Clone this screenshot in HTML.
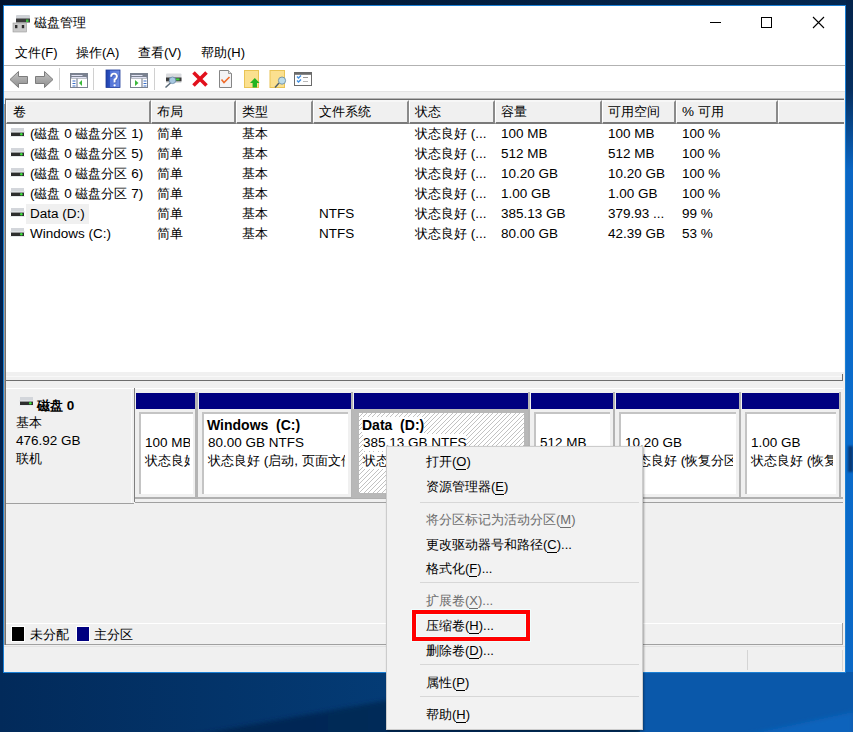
<!DOCTYPE html><html><head><meta charset="utf-8"><style>
*{margin:0;padding:0;box-sizing:border-box}
html,body{width:853px;height:732px;overflow:hidden}
body{position:relative;font-family:"Liberation Sans",sans-serif;font-size:13.49px;color:#000;
background:linear-gradient(180deg,rgba(1,14,34,0.72) 0%,rgba(1,14,34,0.5) 15%,rgba(1,14,34,0) 26%),linear-gradient(90deg,#01204c 0%,#022c5c 28%,#043f7a 45%,#0a58a8 75%,#0a66c4 100%)}
.a{position:absolute}
.t{position:absolute;white-space:pre;line-height:15px}
.hl{position:absolute;height:1px}
.vl{position:absolute;width:1px}
.hc{position:absolute;top:100px;height:24px;background:#f0f0f0;border-left:1px solid #fff;border-top:2px solid #f7f7f7;border-right:2px solid #8a8a8a;border-bottom:2px solid #7a7a7a}
.nav{position:absolute;top:393px;height:16px;background:#000080}
.pb{position:absolute;top:412px;height:82px;background:#fff;border-top:2px solid #c4c4c4;border-left:2px solid #c4c4c4;overflow:hidden}
.pt{position:absolute;white-space:pre;line-height:17px;left:4px;background:#fff}
.mi{position:absolute;white-space:pre;line-height:15px;font-size:13px}
.dis{color:#6d6d6d}
.ms{position:absolute;height:1px;background:#d7d7d7}
u{text-decoration:none;border-bottom:1px solid currentColor}
</style></head><body>
<svg class="a" style="left:0;top:640px" width="853" height="92" viewBox="0 640 853 92">
<defs><linearGradient id="bm" x1="0" y1="0" x2="1" y2="0"><stop offset="0" stop-color="#022a5a"/><stop offset="0.5" stop-color="#043d78"/><stop offset="1" stop-color="#0a5cb0"/></linearGradient>
<linearGradient id="dk" x1="0" y1="0" x2="1" y2="0"><stop offset="0" stop-color="#01204a"/><stop offset="0.6" stop-color="#022a58"/><stop offset="1" stop-color="#03305f"/></linearGradient>
<filter id="bl"><feGaussianBlur stdDeviation="2"/></filter></defs>
<rect x="0" y="640" width="853" height="92" fill="url(#bm)"/>
<path d="M-10,745 L200,734 L400,698 L640,655 L640,745 Z" fill="url(#dk)" filter="url(#bl)"/>
<rect x="640" y="640" width="213" height="92" fill="#0a58aa"/>
<path d="M700,745 L853,712 L853,745 Z" fill="#0a64bc" filter="url(#bl)"/>
</svg>
<div class="a" style="left:846px;top:0;width:7px;height:672px;background:linear-gradient(180deg,#04244c 0px,#062f60 90px,#0a66c4 170px,#0a6ccc 400px,#0a68c6 672px)"></div>
<div class="a" style="left:848px;top:446px;width:5px;height:26px;background:#093a78;filter:blur(1px)"></div>
<div class="a" style="left:3px;top:5px;width:843px;height:668px;border:1px solid #1a7fd4;background:#f0f0f0"></div>
<div class="a" style="left:4px;top:6px;width:841px;height:85px;background:#fff"></div>
<svg class="a" style="left:12px;top:14px" width="20" height="20" viewBox="0 0 20 20">
 <rect x="4" y="1" width="14" height="4" rx="1" fill="#cfd2d6"/>
 <rect x="4" y="4.5" width="14" height="4" fill="#3b3b3b"/>
 <rect x="14" y="5.5" width="2.5" height="2.5" fill="#3fbf3f"/>
 <rect x="1" y="9" width="13.5" height="9" fill="#c9c9c9" stroke="#9a9a9a" stroke-width="0.6"/>
 <rect x="3" y="11" width="2.4" height="3.2" fill="#2e2e2e"/>
 <rect x="9.8" y="11" width="2.4" height="3.2" fill="#2e2e2e"/>
</svg>
<div class="t" style="left:34px;top:15px;font-size:13px">磁盘管理</div>
<div class="a" style="left:710px;top:22px;width:11px;height:1px;background:#000"></div>
<div class="a" style="left:761px;top:17px;width:11px;height:11px;border:1px solid #000"></div>
<svg class="a" style="left:812px;top:16px" width="13" height="13" viewBox="0 0 13 13"><path d="M1 1L12 12M12 1L1 12" stroke="#000" stroke-width="1.1"/></svg>
<div class="t" style="left:15px;top:45px;font-size:13px">文件(F)</div>
<div class="t" style="left:76px;top:45px;font-size:13px">操作(A)</div>
<div class="t" style="left:138px;top:45px;font-size:13px">查看(V)</div>
<div class="t" style="left:201px;top:45px;font-size:13px">帮助(H)</div>
<div class="hl" style="left:4px;top:65px;width:841px;background:#b2b2b2"></div>
<div class="vl" style="left:59px;top:68px;height:22px;background:#d0d0d0"></div>
<div class="vl" style="left:93px;top:68px;height:22px;background:#d0d0d0"></div>
<div class="vl" style="left:154px;top:68px;height:22px;background:#d0d0d0"></div>
<svg class="a" style="left:0;top:66px" width="330" height="25" viewBox="0 66 330 25">
<defs>
<linearGradient id="ga" x1="0" y1="0" x2="0" y2="1"><stop offset="0" stop-color="#c4c4c4"/><stop offset="1" stop-color="#8e8e8e"/></linearGradient>
<linearGradient id="gb" x1="0" y1="0" x2="1" y2="0"><stop offset="0" stop-color="#1f3fa8"/><stop offset="0.25" stop-color="#2a50c0"/><stop offset="0.3" stop-color="#5274d8"/><stop offset="1" stop-color="#6b8ae2"/></linearGradient>
</defs>
<path d="M10,79.5 L18.5,71.5 L18.5,76.5 L27.5,76.5 L27.5,83.5 L18.5,83.5 L18.5,87.5 Z" fill="url(#ga)" stroke="#7c7c7c" stroke-width="1"/>
<path d="M53,79.5 L44.5,71.5 L44.5,76.5 L35.5,76.5 L35.5,83.5 L44.5,83.5 L44.5,87.5 Z" fill="url(#ga)" stroke="#7c7c7c" stroke-width="1"/>
<rect x="70.5" y="73.5" width="17" height="14" fill="#fff" stroke="#7b8290" stroke-width="1"/>
<rect x="70.5" y="73.5" width="17" height="5" fill="#7b8290"/>
<rect x="71.5" y="75" width="11" height="0.9" fill="#eef"/><rect x="71.5" y="77" width="15" height="0.9" fill="#eef"/>
<rect x="76.5" y="78.5" width="1" height="9" fill="#6a7385"/>
<rect x="72.5" y="80.5" width="3" height="1" fill="#3a6fc8"/><rect x="72.5" y="83" width="3" height="1" fill="#3a6fc8"/><rect x="72.5" y="85.5" width="3" height="1" fill="#3a6fc8"/>
<path d="M79,83 L82,80 L82,86 Z" fill="#3cb83c"/>
<rect x="106" y="70" width="14" height="17.5" fill="url(#gb)"/>
<rect x="106" y="70" width="14" height="17.5" fill="none" stroke="#1c3a9a" stroke-width="0.8"/>
<path d="M111.2,76.8 Q111.2,73.6 114,73.6 Q116.9,73.6 116.9,76.4 Q116.9,78.4 114.6,79.6 L114.6,82.6" fill="none" stroke="#1a2f80" stroke-width="2.2" opacity="0.5" transform="translate(0.6,0.6)"/><path d="M111.2,76.8 Q111.2,73.6 114,73.6 Q116.9,73.6 116.9,76.4 Q116.9,78.4 114.6,79.6 L114.6,82.6" fill="none" stroke="#fff" stroke-width="1.9"/><circle cx="114.6" cy="85.3" r="1.15" fill="#fff"/>
<rect x="130.5" y="73.5" width="17" height="14" fill="#fff" stroke="#7b8290" stroke-width="1"/>
<rect x="130.5" y="73.5" width="17" height="5" fill="#7b8290"/>
<rect x="131.5" y="75" width="11" height="0.9" fill="#eef"/><rect x="131.5" y="77" width="15" height="0.9" fill="#eef"/>
<rect x="141.5" y="78.5" width="1" height="9" fill="#6a7385"/>
<rect x="143.5" y="80.5" width="3" height="1" fill="#3a6fc8"/><rect x="143.5" y="83" width="3" height="1" fill="#3a6fc8"/><rect x="143.5" y="85.5" width="3" height="1" fill="#3a6fc8"/>
<path d="M135,80 L138.5,83 L135,86 Z" fill="#3cb83c"/>
<rect x="166" y="73.5" width="15.5" height="9.5" rx="1" fill="#d8dadd"/>
<rect x="166" y="77.5" width="15.5" height="3.8" fill="#3a3a3a"/>
<rect x="176" y="78.4" width="3.5" height="2" fill="#3fd23f"/>
<line x1="171" y1="82.5" x2="165.5" y2="87.5" stroke="#5a6a78" stroke-width="1.5"/>
<circle cx="172.5" cy="80.3" r="3.3" fill="#a8c8e0" stroke="#6a8aa8" stroke-width="0.8"/>
<path d="M193.5,72.5 L206.5,85.5 M206.5,72.5 L193.5,85.5" stroke="#e2101c" stroke-width="3.6"/>
<path d="M219.5,70.5 L228.5,70.5 L231.5,73.5 L231.5,87.5 L219.5,87.5 Z" fill="#f3f3f5" stroke="#858585" stroke-width="1"/>
<path d="M228.5,70.5 L228.5,73.5 L231.5,73.5" fill="#e0e0e0" stroke="#858585" stroke-width="0.8"/>
<path d="M221.5,79.5 L224,82.5 L229.5,77" fill="none" stroke="#ee6a2a" stroke-width="1.6"/>
<rect x="244.5" y="70.5" width="14" height="17" fill="#fbe08f" stroke="#e9c455" stroke-width="1"/>
<path d="M250,83 L254.8,78 L259.6,83 L257,83 L257,87.5 L252.6,87.5 L252.6,83 Z" fill="#22b422"/>
<rect x="270" y="70.5" width="14.5" height="17" fill="#fbe08f" stroke="#e9c455" stroke-width="1"/>
<line x1="279" y1="83" x2="275" y2="87.5" stroke="#4f5f6a" stroke-width="1.4"/>
<circle cx="282" cy="80.6" r="3.6" fill="#bcdcea" stroke="#6f8fa0" stroke-width="0.9"/>
<rect x="294.5" y="72.5" width="17" height="13" fill="#fff" stroke="#6b6b6b" stroke-width="1"/>
<rect x="294.5" y="72.5" width="17" height="2.3" fill="#6b6b6b"/>
<path d="M297,76.5 L298.5,78 L301,75.5 M297,80.5 L298.5,82 L301,79.5" fill="none" stroke="#3f8ee0" stroke-width="1.4"/>
<rect x="303" y="77" width="5" height="1" fill="#9a9a9a"/><rect x="303" y="81" width="5" height="1" fill="#b8b8b8"/>
</svg>
<div class="hl" style="left:4px;top:91px;width:841px;background:#e4e4e4"></div>
<div class="a" style="left:5px;top:98px;width:839px;height:274px;background:#fff;border-top:1px solid #b4b4b4;border-left:1px solid #8a8a8a"></div>
<div class="hl" style="left:5px;top:99px;width:839px;background:#6a6a6a"></div>
<div class="hc" style="left:6px;width:145px"></div>
<div class="t" style="left:13px;top:104px">卷</div>
<div class="hc" style="left:151px;width:85px"></div>
<div class="t" style="left:157px;top:104px">布局</div>
<div class="hc" style="left:236px;width:77px"></div>
<div class="t" style="left:242px;top:104px">类型</div>
<div class="hc" style="left:313px;width:96px"></div>
<div class="t" style="left:319px;top:104px">文件系统</div>
<div class="hc" style="left:409px;width:86px"></div>
<div class="t" style="left:415px;top:104px">状态</div>
<div class="hc" style="left:495px;width:107px"></div>
<div class="t" style="left:501px;top:104px">容量</div>
<div class="hc" style="left:602px;width:74px"></div>
<div class="t" style="left:608px;top:104px">可用空间</div>
<div class="hc" style="left:676px;width:102px"></div>
<div class="t" style="left:682px;top:104px">% 可用</div>
<div class="hc" style="left:778px;width:66px;border-right:none"></div>
<svg class="a" style="left:10px;top:128px" width="15" height="10" viewBox="0 0 15 10">
<rect x="1" y="0" width="13" height="4.6" fill="#d3d6db"/><rect x="0.3" y="3.2" width="14.4" height="1.4" fill="#e2e4e8"/>
<rect x="1" y="4.6" width="13" height="3.4" fill="#2e2e2e"/><rect x="0.3" y="8" width="14.4" height="1" fill="#e6e8ec"/>
<circle cx="11.3" cy="6.3" r="1.25" fill="#3ae43a"/></svg>
<div class="t" style="left:30px;top:126px">(磁盘 0 磁盘分区 1)</div>
<div class="t" style="left:157px;top:126px">简单</div>
<div class="t" style="left:242px;top:126px">基本</div>
<div class="t" style="left:415px;top:126px">状态良好 (...</div>
<div class="t" style="left:501px;top:126px">100 MB</div>
<div class="t" style="left:608px;top:126px">100 MB</div>
<div class="t" style="left:682px;top:126px">100 %</div>
<svg class="a" style="left:10px;top:148px" width="15" height="10" viewBox="0 0 15 10">
<rect x="1" y="0" width="13" height="4.6" fill="#d3d6db"/><rect x="0.3" y="3.2" width="14.4" height="1.4" fill="#e2e4e8"/>
<rect x="1" y="4.6" width="13" height="3.4" fill="#2e2e2e"/><rect x="0.3" y="8" width="14.4" height="1" fill="#e6e8ec"/>
<circle cx="11.3" cy="6.3" r="1.25" fill="#3ae43a"/></svg>
<div class="t" style="left:30px;top:146px">(磁盘 0 磁盘分区 5)</div>
<div class="t" style="left:157px;top:146px">简单</div>
<div class="t" style="left:242px;top:146px">基本</div>
<div class="t" style="left:415px;top:146px">状态良好 (...</div>
<div class="t" style="left:501px;top:146px">512 MB</div>
<div class="t" style="left:608px;top:146px">512 MB</div>
<div class="t" style="left:682px;top:146px">100 %</div>
<svg class="a" style="left:10px;top:168px" width="15" height="10" viewBox="0 0 15 10">
<rect x="1" y="0" width="13" height="4.6" fill="#d3d6db"/><rect x="0.3" y="3.2" width="14.4" height="1.4" fill="#e2e4e8"/>
<rect x="1" y="4.6" width="13" height="3.4" fill="#2e2e2e"/><rect x="0.3" y="8" width="14.4" height="1" fill="#e6e8ec"/>
<circle cx="11.3" cy="6.3" r="1.25" fill="#3ae43a"/></svg>
<div class="t" style="left:30px;top:166px">(磁盘 0 磁盘分区 6)</div>
<div class="t" style="left:157px;top:166px">简单</div>
<div class="t" style="left:242px;top:166px">基本</div>
<div class="t" style="left:415px;top:166px">状态良好 (...</div>
<div class="t" style="left:501px;top:166px">10.20 GB</div>
<div class="t" style="left:608px;top:166px">10.20 GB</div>
<div class="t" style="left:682px;top:166px">100 %</div>
<svg class="a" style="left:10px;top:188px" width="15" height="10" viewBox="0 0 15 10">
<rect x="1" y="0" width="13" height="4.6" fill="#d3d6db"/><rect x="0.3" y="3.2" width="14.4" height="1.4" fill="#e2e4e8"/>
<rect x="1" y="4.6" width="13" height="3.4" fill="#2e2e2e"/><rect x="0.3" y="8" width="14.4" height="1" fill="#e6e8ec"/>
<circle cx="11.3" cy="6.3" r="1.25" fill="#3ae43a"/></svg>
<div class="t" style="left:30px;top:186px">(磁盘 0 磁盘分区 7)</div>
<div class="t" style="left:157px;top:186px">简单</div>
<div class="t" style="left:242px;top:186px">基本</div>
<div class="t" style="left:415px;top:186px">状态良好 (...</div>
<div class="t" style="left:501px;top:186px">1.00 GB</div>
<div class="t" style="left:608px;top:186px">1.00 GB</div>
<div class="t" style="left:682px;top:186px">100 %</div>
<div class="a" style="left:26px;top:204px;width:63px;height:20px;background:#f0f0f0"></div>
<svg class="a" style="left:10px;top:208px" width="15" height="10" viewBox="0 0 15 10">
<rect x="1" y="0" width="13" height="4.6" fill="#d3d6db"/><rect x="0.3" y="3.2" width="14.4" height="1.4" fill="#e2e4e8"/>
<rect x="1" y="4.6" width="13" height="3.4" fill="#2e2e2e"/><rect x="0.3" y="8" width="14.4" height="1" fill="#e6e8ec"/>
<circle cx="11.3" cy="6.3" r="1.25" fill="#3ae43a"/></svg>
<div class="t" style="left:30px;top:206px">Data (D:)</div>
<div class="t" style="left:157px;top:206px">简单</div>
<div class="t" style="left:242px;top:206px">基本</div>
<div class="t" style="left:319px;top:206px">NTFS</div>
<div class="t" style="left:415px;top:206px">状态良好 (...</div>
<div class="t" style="left:501px;top:206px">385.13 GB</div>
<div class="t" style="left:608px;top:206px">379.93 ...</div>
<div class="t" style="left:682px;top:206px">99 %</div>
<svg class="a" style="left:10px;top:228px" width="15" height="10" viewBox="0 0 15 10">
<rect x="1" y="0" width="13" height="4.6" fill="#d3d6db"/><rect x="0.3" y="3.2" width="14.4" height="1.4" fill="#e2e4e8"/>
<rect x="1" y="4.6" width="13" height="3.4" fill="#2e2e2e"/><rect x="0.3" y="8" width="14.4" height="1" fill="#e6e8ec"/>
<circle cx="11.3" cy="6.3" r="1.25" fill="#3ae43a"/></svg>
<div class="t" style="left:30px;top:226px">Windows (C:)</div>
<div class="t" style="left:157px;top:226px">简单</div>
<div class="t" style="left:242px;top:226px">基本</div>
<div class="t" style="left:319px;top:226px">NTFS</div>
<div class="t" style="left:415px;top:226px">状态良好 (...</div>
<div class="t" style="left:501px;top:226px">80.00 GB</div>
<div class="t" style="left:608px;top:226px">42.39 GB</div>
<div class="t" style="left:682px;top:226px">53 %</div>
<div class="a" style="left:5px;top:372px;width:839px;height:8px;background:#f0f0f0"></div>
<div class="hl" style="left:6px;top:376px;width:836px;background:#f8f8f8"></div>
<div class="hl" style="left:5px;top:380px;width:838px;background:#6d6d6d"></div>
<div class="vl" style="left:842px;top:374px;height:6px;background:#6d6d6d"></div>
<div class="hl" style="left:5px;top:388px;width:838px;background:#fff"></div>
<div class="a" style="left:5px;top:99px;width:1px;height:546px;background:#707070"></div>
<div class="a" style="left:4px;top:104px;width:1px;height:541px;background:#a39d97"></div>
<div class="vl" style="left:131px;top:388px;height:115px;background:#fafafa"></div>
<div class="vl" style="left:134px;top:388px;height:114px;background:#808080"></div>
<div class="hl" style="left:6px;top:503px;width:128px;background:#a0a0a0"></div>
<svg class="a" style="left:19px;top:397px" width="15" height="10" viewBox="0 0 15 10">
<rect x="1" y="0" width="13" height="4.6" fill="#d3d6db"/><rect x="0.3" y="3.2" width="14.4" height="1.4" fill="#e2e4e8"/>
<rect x="1" y="4.6" width="13" height="3.4" fill="#2e2e2e"/><rect x="0.3" y="8" width="14.4" height="1" fill="#e6e8ec"/>
<circle cx="11.3" cy="6.3" r="1.25" fill="#3ae43a"/></svg>
<div class="t" style="left:37px;top:398px;font-weight:bold">磁盘 0</div>
<div class="t" style="left:16px;top:415px">基本</div>
<div class="t" style="left:16px;top:433px">476.92 GB</div>
<div class="t" style="left:16px;top:451px">联机</div>
<div class="a" style="left:135px;top:497px;width:708px;height:2px;background:#b0b0b0"></div>
<div class="a" style="left:135px;top:502px;width:708px;height:1px;background:#a0a0a0"></div>
<div class="nav" style="left:136px;width:59px"></div>
<div class="a" style="left:195px;top:392px;width:3px;height:106px;background:#b4b4b4"></div>
<div class="pb" style="left:139px;width:54px">
<div class="a" style="left:0;top:0;width:49px;height:80px;overflow:hidden">
<div class="pt" style="left:4px;top:20px">100 MB</div>
<div class="pt" style="left:4px;top:38px">状态良好</div>
</div></div>
<div class="nav" style="left:199px;width:152px"></div>
<div class="a" style="left:351px;top:392px;width:2px;height:106px;background:#b4b4b4"></div>
<div class="pb" style="left:202px;width:146px">
<div class="a" style="left:0;top:0;width:141px;height:80px;overflow:hidden">
<div class="pt" style="left:3px;top:3px;font-weight:bold;font-size:14px">Windows  (C:)</div>
<div class="pt" style="left:4px;top:20px">80.00 GB NTFS</div>
<div class="pt" style="left:4px;top:38px">状态良好 (启动, 页面文件, 故障转储, 主分区)</div>
</div></div>
<div class="nav" style="left:354px;width:174px"></div>
<div class="a" style="left:528px;top:392px;width:2px;height:106px;background:#b4b4b4"></div>
<div class="a" style="left:352px;top:409px;width:176px;height:89px;background:#b8b8b8"></div>
<div class="a" style="left:359px;top:413px;width:165px;height:80px;background:repeating-linear-gradient(135deg,#fff 0px,#fff 2.4px,#c2c2c2 2.4px,#c2c2c2 3.18px);overflow:hidden"></div>
<div class="a" style="left:359px;top:413px;width:165px;height:80px;overflow:hidden">
<div class="a" style="left:0;top:0;width:162px;height:80px;overflow:hidden">
<div class="pt" style="left:3px;top:4px;font-weight:bold;font-size:14px">Data  (D:)</div>
<div class="pt" style="left:4px;top:21px">385.13 GB NTFS</div>
<div class="pt" style="left:4px;top:39px">状态良好 (主分区)</div>
</div></div>
<div class="nav" style="left:531px;width:82px"></div>
<div class="a" style="left:613px;top:392px;width:2px;height:106px;background:#b4b4b4"></div>
<div class="pb" style="left:534px;width:76px">
<div class="a" style="left:0;top:0;width:71px;height:80px;overflow:hidden">
<div class="pt" style="left:4px;top:20px">512 MB</div>
<div class="pt" style="left:4px;top:38px">状态良好 (恢复分区)</div>
</div></div>
<div class="nav" style="left:616px;width:123px"></div>
<div class="a" style="left:739px;top:392px;width:2px;height:106px;background:#b4b4b4"></div>
<div class="pb" style="left:619px;width:117px">
<div class="a" style="left:0;top:0;width:112px;height:80px;overflow:hidden">
<div class="pt" style="left:4px;top:20px">10.20 GB</div>
<div class="pt" style="left:4px;top:38px">状态良好 (恢复分区)</div>
</div></div>
<div class="nav" style="left:742px;width:97px"></div>
<div class="a" style="left:839px;top:392px;width:2px;height:106px;background:#b4b4b4"></div>
<div class="pb" style="left:745px;width:91px">
<div class="a" style="left:0;top:0;width:86px;height:80px;overflow:hidden">
<div class="pt" style="left:4px;top:20px">1.00 GB</div>
<div class="pt" style="left:4px;top:38px">状态良好 (恢复分区)</div>
</div></div>
<div class="hl" style="left:6px;top:623px;width:837px;background:#fff"></div>
<div class="hl" style="left:6px;top:644px;width:837px;background:#a0a0a0"></div>
<div class="vl" style="left:842px;top:623px;height:22px;background:#a0a0a0"></div>
<div class="a" style="left:12px;top:627px;width:12px;height:14px;background:#000;outline:1px solid #fff"></div>
<div class="t" style="left:30px;top:627px">未分配</div>
<div class="a" style="left:77px;top:627px;width:12px;height:14px;background:#000080;outline:1px solid #fff"></div>
<div class="t" style="left:94px;top:627px">主分区</div>
<div class="hl" style="left:4px;top:646px;width:841px;background:#e2e2e2"></div>
<div class="vl" style="left:747px;top:650px;height:20px;background:#d4d4d4"></div>
<div class="vl" style="left:842px;top:650px;height:21px;background:#d4d4d4"></div>
<div class="a" style="left:386px;top:446px;width:257px;height:284px;background:#f2f2f2;border:1px solid #cccccc;box-shadow:1px 1px 2px rgba(0,0,0,0.35)"></div>
<div class="mi" style="left:426px;top:454px">打开(<u>O</u>)</div>
<div class="mi" style="left:426px;top:479px">资源管理器(<u>E</u>)</div>
<div class="ms" style="left:420px;top:502px;width:219px"></div>
<div class="mi dis" style="left:426px;top:512px">将分区标记为活动分区(<u>M</u>)</div>
<div class="mi" style="left:426px;top:537px">更改驱动器号和路径(<u>C</u>)...</div>
<div class="mi" style="left:426px;top:561px">格式化(<u>F</u>)...</div>
<div class="ms" style="left:420px;top:582px;width:219px"></div>
<div class="mi dis" style="left:426px;top:593px">扩展卷(<u>X</u>)...</div>
<div class="mi" style="left:426px;top:618px">压缩卷(<u>H</u>)...</div>
<div class="mi" style="left:426px;top:643px">删除卷(<u>D</u>)...</div>
<div class="ms" style="left:420px;top:664px;width:219px"></div>
<div class="mi" style="left:426px;top:675px">属性(<u>P</u>)</div>
<div class="ms" style="left:420px;top:696px;width:219px"></div>
<div class="mi" style="left:426px;top:707px">帮助(<u>H</u>)</div>
<div class="a" style="left:412px;top:610px;width:118px;height:31px;border:4px solid #ff0000;outline:1px solid #effefe"></div>
<div class="a" style="left:416px;top:614px;width:110px;height:23px;border:1px solid #effefe"></div>
</body></html>
